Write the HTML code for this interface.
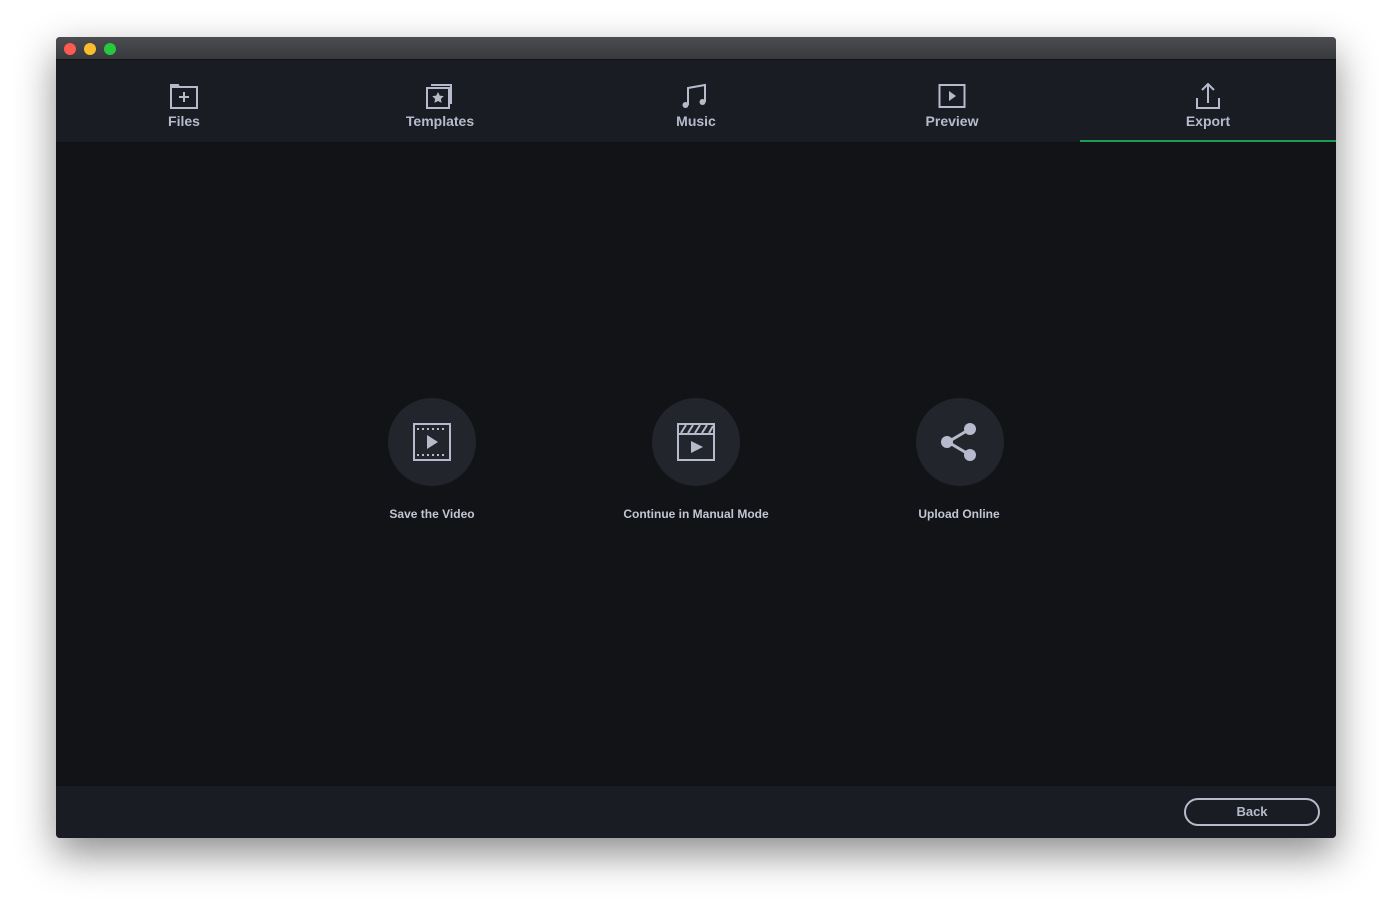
<!DOCTYPE html>
<html><head><style>
body{margin:0;width:1392px;height:912px;background:#fff;position:relative;overflow:hidden;font-family:"Liberation Sans",sans-serif}
.win{position:absolute;left:56px;top:37px;width:1280px;height:801px;background:#121317;box-shadow:0 16px 40px rgba(0,0,0,.45);border-radius:4px;overflow:hidden}
.tb{height:22px;background:linear-gradient(#4a4c4f,#38393c);border-bottom:1px solid #111}
.dot{position:absolute;top:6px;width:12px;height:12px;border-radius:50%}
.tabs{position:absolute;top:23px;left:0;width:1280px;height:82px;background:#1a1c23}
.tab{position:absolute;top:0;width:256px;height:82px;text-align:center;color:#b6bacb;font-size:14px;font-weight:bold}
.tab svg{position:absolute;left:112px;top:22px}
.tab span{position:absolute;left:0;right:0;top:53px}
.act{border-bottom:2px solid #1aa050;height:80px}
.c{position:absolute;width:88px;height:88px;border-radius:50%;background:#23252d}
.c svg{position:absolute;left:24px;top:24px}
.lbl{position:absolute;top:470px;width:240px;text-align:center;color:#c2c6d4;font-size:12px;font-weight:bold}
.foot{position:absolute;left:0;top:749px;width:1280px;height:52px;background:#1a1c23}
.back{position:absolute;left:1128px;top:12px;width:132px;height:24px;border:2px solid #b6bacb;border-radius:14px;color:#b6bacb;font-size:13px;font-weight:bold;text-align:center;line-height:24px}
</style></head><body>
<div class="win">
<div class="tb"></div>
<div class="dot" style="left:8px;background:#fd5a52"></div>
<div class="dot" style="left:28px;background:#fdbb2e"></div>
<div class="dot" style="left:48px;background:#27c83f"></div>
<div class="tabs">
<div class="tab" style="left:0"><svg width="32" height="28" viewBox="0 0 32 28" fill="none" stroke="#b6bacb" stroke-width="2"><path d="M3 5h26v21H3z M3 5V3h7l1 2"/><path d="M16 10v10M11 15h10"/></svg><span>Files</span></div>
<div class="tab" style="left:256px"><svg width="32" height="28" viewBox="0 0 32 28" fill="none" stroke="#b6bacb" stroke-width="2"><rect x="3" y="6" width="22" height="20"/><path d="M7 3h20v19"/><path d="M14 10l1.8 3.6 4 .5-2.9 2.8.7 4-3.6-1.9-3.6 1.9.7-4-2.9-2.8 4-.5z" fill="#b6bacb" stroke="none"/></svg><span>Templates</span></div>
<div class="tab" style="left:512px"><svg width="32" height="28" viewBox="0 0 32 28" fill="none" stroke="#b6bacb" stroke-width="2"><path d="M8 23V6l17-3v17"/><circle cx="5.5" cy="23" r="3" fill="#b6bacb" stroke="none"/><circle cx="22.5" cy="20" r="3" fill="#b6bacb" stroke="none"/></svg><span>Music</span></div>
<div class="tab" style="left:768px"><svg width="32" height="28" viewBox="0 0 32 28" fill="none" stroke="#b6bacb" stroke-width="2"><rect x="3.5" y="3" width="25" height="22"/><path d="M13 9l7 5-7 5z" fill="#b6bacb" stroke="none"/></svg><span>Preview</span></div>
<div class="tab act" style="left:1024px"><svg width="32" height="28" viewBox="0 0 32 28" fill="none" stroke="#b6bacb" stroke-width="2"><path d="M5 16v10h22V16"/><path d="M16 21V2M10 8l6-6 6 6"/></svg><span>Export</span></div>
</div>
<div class="c" style="left:332px;top:361px"><svg width="40" height="40" viewBox="0 0 40 40" fill="none" stroke="#b6bacb" stroke-width="2"><rect x="2" y="2" width="36" height="36"/><path d="M5 7h30M5 33h30" stroke-dasharray="2 3"/><path d="M15 13l11 7-11 7z" fill="#b6bacb" stroke="none"/></svg></div>
<div class="c" style="left:596px;top:361px"><svg width="40" height="40" viewBox="0 0 40 40" fill="none" stroke="#b6bacb" stroke-width="2"><rect x="2" y="2" width="36" height="36"/><path d="M2 12h36"/><path d="M5 11l5-8M12 11l5-8M19 11l5-8M26 11l5-8M33 11l4-7"/><path d="M15 19l12 6-12 6z" fill="#b6bacb" stroke="none"/></svg></div>
<div class="c" style="left:860px;top:361px"><svg width="40" height="40" viewBox="0 0 40 40" fill="none" stroke="#b6bacb" stroke-width="3"><path d="M30 7L8 20l22 13"/><circle cx="30" cy="7" r="6" fill="#b6bacb" stroke="none"/><circle cx="7" cy="20" r="6" fill="#b6bacb" stroke="none"/><circle cx="30" cy="33" r="6" fill="#b6bacb" stroke="none"/></svg></div>
<div class="lbl" style="left:256px">Save the Video</div>
<div class="lbl" style="left:520px">Continue in Manual Mode</div>
<div class="lbl" style="left:783px">Upload Online</div>
<div class="foot"><div class="back">Back</div></div>
</div>
</body></html>
